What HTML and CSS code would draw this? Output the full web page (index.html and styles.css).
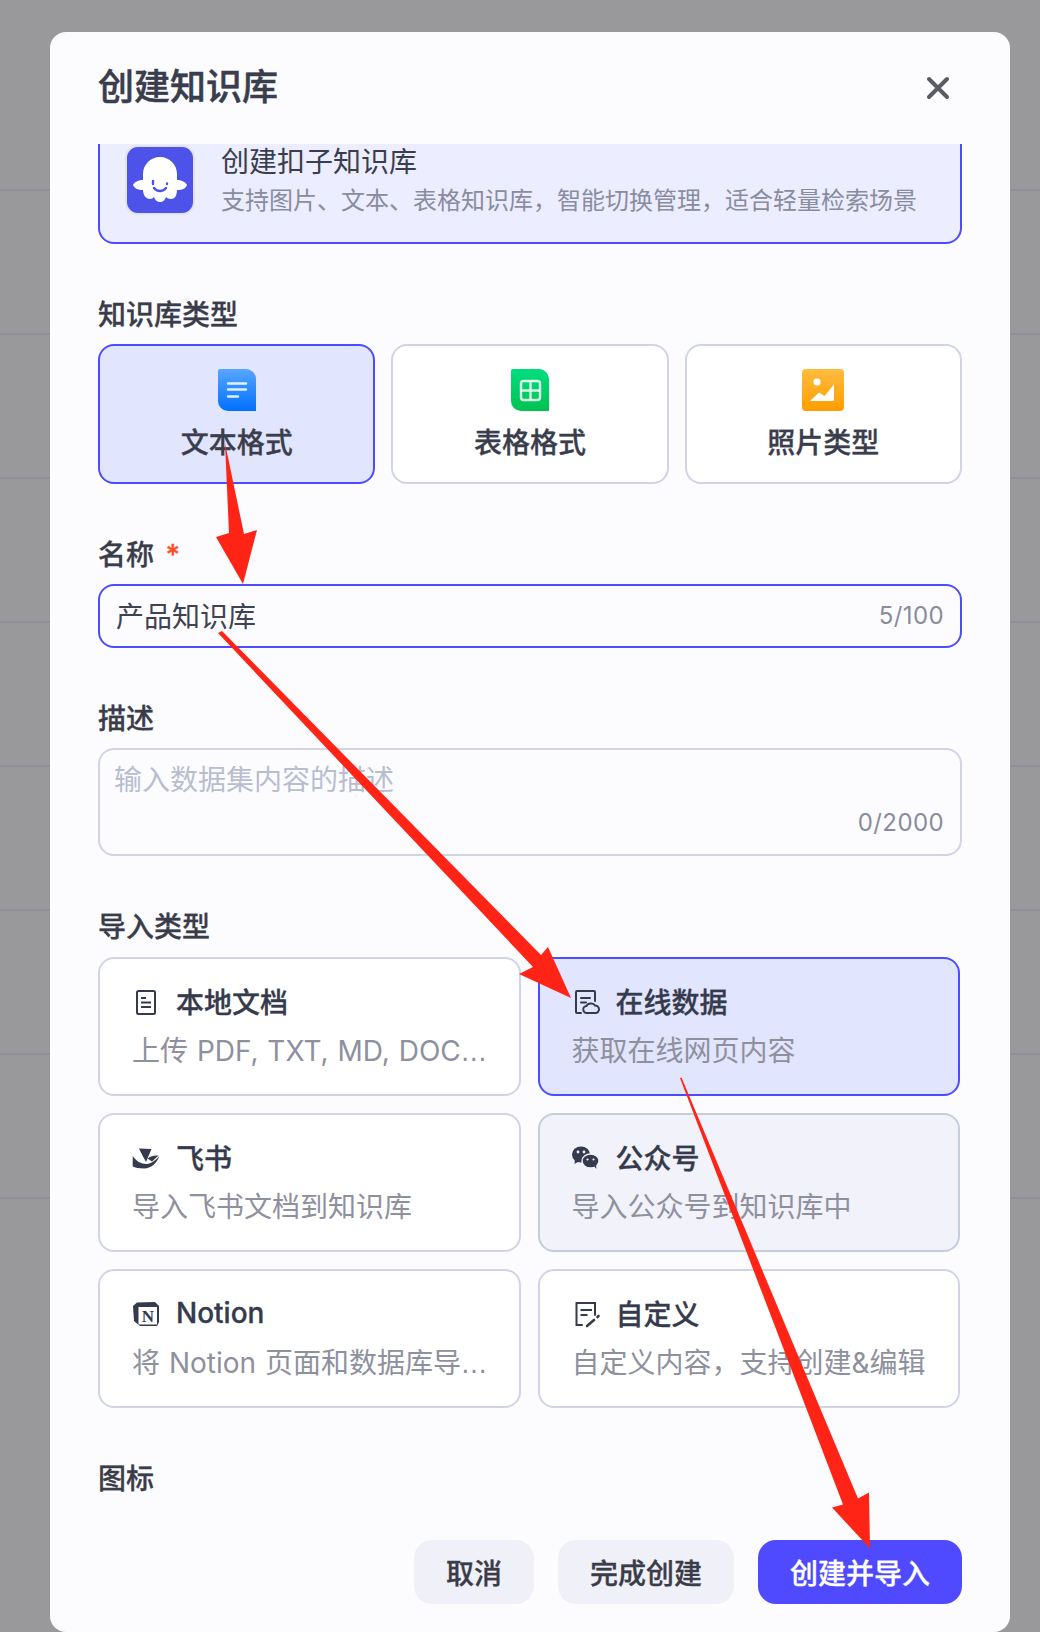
FILE: index.html
```html
<!DOCTYPE html>
<html lang="zh-CN">
<head>
  <meta charset="UTF-8">
  <title>创建知识库</title>
  <link rel="stylesheet" href="styles.css">
</head>
<body>
  <div class="modal">
    <div class="modal-head">
      <h1>创建知识库</h1>
      <svg class="close" viewBox="0 0 24 24"><path d="M3 3l18 18M21 3L3 21"/></svg>
    </div>

    <div class="modal-body">
      <div class="kb-card">
        <svg class="kb-logo" viewBox="0 0 70 70">
          <rect x="1" y="1" width="68" height="68" rx="12" fill="#4d53e8" stroke="#e0e2f4" stroke-width="2"/>
          <path fill="#fff" d="M35 12c-10 0-17 8-17 17v6c-4 0-9 2-10 5 1 3 5 5 10 5 0 5 3 9 7 9 2 0 3-1 4-2 1 3 3 5 6 5s5-2 6-5c1 1 3 2 5 2 4 0 6-4 6-9 6 0 9-2 10-5-1-3-6-5-10-5v-6c0-9-7-17-17-17z"/>
          <path fill="none" stroke="#4d53e8" stroke-width="2.4" stroke-linecap="round" d="M28 36v3M42 38.500v.5M29 43c3 4 9 4 12 0"/>
        </svg>
        <div>
          <div class="kb-title">创建扣子知识库</div>
          <div class="kb-desc">支持图片、文本、表格知识库，智能切换管理，适合轻量检索场景</div>
        </div>
      </div>

      <div class="field-label">知识库类型</div>
      <div class="type-grid">
        <div class="type-card active">
          <svg viewBox="0 0 38 42" width="38" height="42">
            <defs><linearGradient id="gb" x1="0" y1="0" x2="0" y2="1"><stop offset="0" stop-color="#58a6ff"/><stop offset="1" stop-color="#0070ff"/></linearGradient></defs>
            <path fill="url(#gb)" d="M0 2a2 2 0 0 1 2-2h26a10 10 0 0 1 10 10v32H10A10 10 0 0 1 0 32z"/>
            <path fill="none" stroke="#fff" stroke-opacity=".85" stroke-width="2.4" stroke-linecap="round" d="M10 14.500h18M10 20.500h18M10 27.500h10"/>
          </svg>
          <span>文本格式</span>
        </div>
        <div class="type-card">
          <svg viewBox="0 0 38 42" width="38" height="42">
            <defs><linearGradient id="gg" x1="0" y1="0" x2="0" y2="1"><stop offset="0" stop-color="#00dd7e"/><stop offset="1" stop-color="#00c250"/></linearGradient></defs>
            <path fill="url(#gg)" d="M0 2a2 2 0 0 1 2-2h26a10 10 0 0 1 10 10v32H10A10 10 0 0 1 0 32z"/>
            <rect x="10" y="12" width="19" height="19" rx="2.500" fill="none" stroke="#fff" stroke-opacity=".85" stroke-width="2.4"/>
            <path stroke="#fff" stroke-opacity=".85" stroke-width="2.4" d="M19.500 12v19M10 21.500h19"/>
          </svg>
          <span>表格格式</span>
        </div>
        <div class="type-card">
          <svg viewBox="0 0 42 42" width="42" height="42">
            <defs><linearGradient id="go" x1="0" y1="0" x2="0" y2="1"><stop offset="0" stop-color="#ffbd3f"/><stop offset="1" stop-color="#ff9d00"/></linearGradient></defs>
            <rect width="42" height="42" rx="4" fill="url(#go)"/>
            <circle cx="15" cy="13" r="3.6" fill="#fff"/>
            <path fill="#fff" d="M8 32l9-8.500 5.500 3.500L32 15.500V32z"/>
          </svg>
          <span>照片类型</span>
        </div>
      </div>

      <div class="field-label">名称 <span class="required">*</span></div>
      <div class="text-input focused">
        <span class="input-value">产品知识库</span>
        <span class="counter">5/100</span>
      </div>

      <div class="field-label">描述</div>
      <div class="text-area">
        <div class="placeholder">输入数据集内容的描述</div>
        <div class="counter">0/2000</div>
      </div>

      <div class="field-label label-import">导入类型</div>
      <div class="import-grid">
        <div class="import-card">
          <div class="import-title">
            <svg viewBox="0 0 28 28" class="ic"><rect x="5" y="2" width="18" height="23" rx="1.500" fill="none" stroke="currentColor" stroke-width="2"/><path stroke="currentColor" stroke-width="2" d="M9 9h5M9 13.500h10M9 18h10"/></svg>
            <span>本地文档</span>
          </div>
          <div class="import-desc">上传 PDF, TXT, MD, DOC<span class="more">…</span></div>
        </div>
        <div class="import-card active">
          <div class="import-title">
            <svg viewBox="0 0 28 28" class="ic"><path fill="none" stroke="currentColor" stroke-width="2" stroke-linecap="round" d="M9 24H5a1 1 0 0 1-1-1V3a1 1 0 0 1 1-1h17a1 1 0 0 1 1 1v9M9 9h9M9 13.500h5"/><path fill="none" stroke="currentColor" stroke-width="2" d="M15 24a3.500 3.500 0 0 1-.5-7c1-3 7-3.500 8.500-.5a3.600 3.600 0 0 1 .5 7.500z"/></svg>
            <span>在线数据</span>
          </div>
          <div class="import-desc">获取在线网页内容</div>
        </div>
        <div class="import-card">
          <div class="import-title">
            <svg viewBox="0 0 28 28" class="ic">
              <path fill="currentColor" d="M7 3.500L19.500 4 14 17C12 13 10 10 7 3.500z"/>
              <path fill="currentColor" d="M.7 11C4 16 9 19 14.500 19 19 19 24 15 27.300 11 25 18 19 23.500 12 23.500 7 23.500 3 22.500.7 21.500z"/>
              <path fill="currentColor" d="M15.500 13.500C18.500 11 22.500 10 26.500 10.500L20 16.500z"/>
            </svg>
            <span>飞书</span>
          </div>
          <div class="import-desc">导入飞书文档到知识库</div>
        </div>
        <div class="import-card disabled">
          <div class="import-title">
            <svg viewBox="0 0 28 28" class="ic">
              <ellipse cx="9" cy="9.500" rx="9" ry="8" fill="currentColor"/>
              <path fill="currentColor" d="M3 14l-.5 5 5-3z"/>
              <ellipse cx="18.500" cy="16" rx="8.500" ry="7" fill="currentColor" stroke="#f1f2fa" stroke-width="1.4"/>
              <path fill="currentColor" d="M22 21l2.500 3-.5-4.500z"/>
              <g fill="#f1f2fa"><circle cx="6" cy="7" r="1.4"/><circle cx="12" cy="7" r="1.4"/><circle cx="15.500" cy="14.500" r="1.1"/><circle cx="21.500" cy="14.500" r="1.1"/></g>
            </svg>
            <span>公众号</span>
          </div>
          <div class="import-desc">导入公众号到知识库中</div>
        </div>
        <div class="import-card">
          <div class="import-title">
            <svg viewBox="0 0 28 28" class="ic">
              <path fill="currentColor" d="M1 5l4-3.500L23 1l4 4v16l-2 4H8l-6-5z"/>
              <rect x="6.500" y="6" width="18.500" height="17.500" fill="#fff"/>
              <text x="15.800" y="21" class="notion-n">N</text>
            </svg>
            <span>Notion</span>
          </div>
          <div class="import-desc">将 Notion 页面和数据库导<span class="more">…</span></div>
        </div>
        <div class="import-card">
          <div class="import-title">
            <svg viewBox="0 0 28 28" class="ic">
              <path fill="none" stroke="currentColor" stroke-width="2" stroke-linecap="round" d="M10 24H4.500V2h18.500v12"/>
              <path stroke="currentColor" stroke-width="2" d="M8.500 9H20M8.500 14h7"/>
              <path stroke="currentColor" stroke-width="2.6" stroke-linecap="round" d="M15 25l7-6M25.500 16l1-1"/>
            </svg>
            <span>自定义</span>
          </div>
          <div class="import-desc">自定义内容，支持创建&amp;编辑</div>
        </div>
      </div>

      <div class="field-label label-icon">图标</div>
    </div>

    <div class="modal-foot">
      <button class="btn">取消</button>
      <button class="btn">完成创建</button>
      <button class="btn primary">创建并导入</button>
    </div>
  </div>

  <!-- annotation arrows drawn over the screenshot -->
  <svg class="arrows" viewBox="0 0 1040 1632" width="1040" height="1632">
    <path d="M225 443l4 90-13 4 27 47 14-54-13 4z"/>
    <path d="M218 633l4-2 319 324 7-8 23 51-52-24 14-7z"/>
    <path d="M680 1078l1.500-.5 176.500 421 11-6 1 56-38-41 11-3z"/>
  </svg>
</body>
</html>
```

FILE: styles.css
```css
* {
  box-sizing: border-box;
}
html,
body {
  margin: 0;
  height: 1632px;
}
body {
  width: 1040px;
  overflow: hidden;
  position: relative;
  font-family: Inter, "Noto Sans CJK SC", sans-serif;
  color: #3a3d4c;
  padding: 32px 30px 0 50px;
  background-color: #99999b;
  background-image: repeating-linear-gradient(to bottom, transparent 0, transparent 45px, #90909a 45px, #90909a 47px, transparent 47px, transparent 144px);
  background-position: 0 144px;
  background-size: 100% 1055px;
  background-repeat: no-repeat;
}
.modal {
  height: 100%;
  background: #fcfcff;
  border-radius: 16px;
  display: flex;
  flex-direction: column;
}
.modal-head {
  height: 112px;
  flex: none;
  padding: 16px 48px 0;
  display: flex;
  align-items: center;
  justify-content: space-between;
}
.modal-head h1 {
  margin: 0;
  font-size: 36px;
  font-weight: 500;
  -webkit-text-stroke: .5px;
  line-height: 48px;
  position: relative;
  top: -9px;
}
.close {
  width: 24px;
  height: 24px;
  position: relative;
  top: -8px;
  left: -12px;
  fill: none;
  stroke: #5a5b66;
  stroke-width: 4;
  stroke-linecap: round;
}
.modal-body {
  flex: 1;
  min-height: 0;
  overflow: hidden;
  padding: 0 48px;
}
.kb-card {
  margin-top: -18px;
  height: 118px;
  border: 2px solid #4d4dff;
  border-radius: 16px;
  background: #ecedfe;
  display: flex;
  align-items: flex-start;
  gap: 26px;
  padding: 17px 25px 0;
}
.kb-logo {
  width: 70px;
  height: 70px;
  flex: none;
}
.kb-title {
  font-size: 28px;
  line-height: 38px;
  color: #3a3d4c;
  margin-top: -2px;
}
.kb-desc {
  font-size: 24px;
  line-height: 36px;
  margin-top: 2px;
  color: #888c9e;
}
.field-label {
  font-size: 28px;
  font-weight: 500;
  -webkit-text-stroke: .3px;
  line-height: 40px;
  margin: 51px 0 9px;
  color: #3a3c4a;
}
.label-import {
  margin: 51px 0 10px;
}
.label-icon {
  margin-top: 51px;
}
.required {
  color: #ff4d22;
  margin-left: 4px;
}
.type-grid {
  display: grid;
  grid-template-columns: repeat(3, 1fr);
  gap: 16px;
}
.type-card {
  height: 140px;
  border: 2px solid #d0d4e4;
  border-radius: 16px;
  background: #fff;
  display: flex;
  flex-direction: column;
  align-items: center;
  padding-top: 23px;
  font-size: 28px;
  font-weight: 500;
  -webkit-text-stroke: .3px;
  line-height: 40px;
}
.type-card span {
  margin-top: 12px;
}
.type-card.active,
.import-card.active {
  border-color: #4d4dff;
  background: #e1e5fd;
}
.text-input {
  height: 64px;
  border-radius: 16px;
  background: #fcfcff;
  padding: 0 16px 2px;
  display: flex;
  align-items: center;
  justify-content: space-between;
}
.text-input.focused {
  border: 2px solid #4d4dff;
}
.input-value {
  font-size: 28px;
  color: #3f4251;
}
.counter {
  font-size: 24px;
  letter-spacing: .4px;
  color: #888c9c;
}
.text-area {
  height: 108px;
  border: 2px solid #d0d4e4;
  border-radius: 16px;
  padding: 11px 16px 0 14px;
}
.placeholder {
  font-size: 28px;
  line-height: 38px;
  color: #b9bdd0;
}
.text-area .counter {
  text-align: right;
  margin-top: 9px;
  line-height: 30px;
}
.import-grid {
  display: grid;
  grid-template-columns: repeat(2, 1fr);
  gap: 17px;
  margin-right: 2px;
}
.import-card {
  height: 139px;
  min-width: 0;
  border: 2px solid #d0d4e4;
  border-radius: 16px;
  background: #fff;
  padding: 22px 32px 0;
}
.import-card.disabled {
  background: #f1f2fa;
  border-color: #c5ccdd;
}
.import-title {
  display: flex;
  align-items: center;
  height: 40px;
  font-size: 28px;
  font-weight: 500;
  -webkit-text-stroke: .3px;
  color: #353a4c;
}
.ic {
  width: 28px;
  height: 28px;
  flex: none;
  margin: 3px 16px 0 0;
  overflow: visible;
  -webkit-text-stroke: 0;
}
.notion-n {
  font-family: "Liberation Serif", serif;
  font-size: 17px;
  font-weight: 700;
  text-anchor: middle;
  fill: currentColor;
}
.import-desc {
  font-size: 28px;
  line-height: 40px;
  margin-top: 10px;
  word-spacing: 1px;
  color: #8e909e;
  white-space: nowrap;
}
.more {
  font-family: "DejaVu Sans", sans-serif;
  font-size: 26px;
}
.modal-foot {
  height: 92px;
  flex: none;
  padding: 0 48px 28px;
  display: flex;
  justify-content: flex-end;
  align-items: flex-start;
  gap: 24px;
}
.btn {
  height: 64px;
  padding: 0 32px;
  border: 0;
  border-radius: 18px;
  background: #f0f1f8;
  color: #3a3c4a;
  font-family: inherit;
  font-size: 28px;
  font-weight: 500;
  -webkit-text-stroke: .3px;
}
.btn.primary {
  background: #4f4aff;
  color: #fff;
}
.arrows {
  position: absolute;
  left: 0;
  top: 0;
  fill: #ff2416;
  pointer-events: none;
}
```
